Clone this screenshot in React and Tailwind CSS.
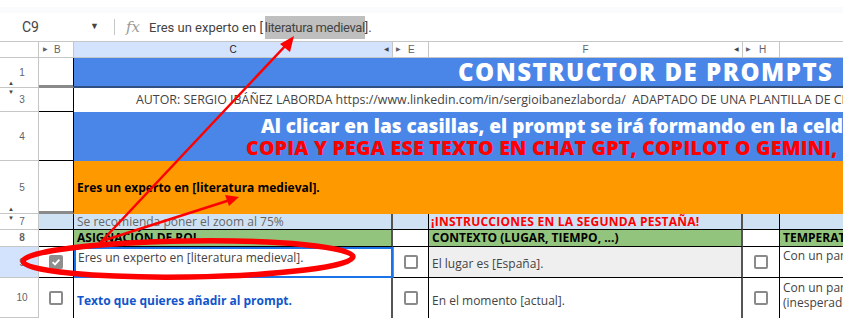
const cell = "font-['Open_Sans',sans-serif]";
const hdr = "font-['Liberation_Sans',Arial,sans-serif] text-[10px] text-[#5f6368]";

function Box({ checked }) {
  if (checked) {
    return (
      <div className="w-[14px] h-[14px] rounded-[2px] bg-[#8e8e8e] flex items-center justify-center">
        <svg width="10" height="10" viewBox="0 0 10 10">
          <path d="M1.6 5.2 L4 7.4 L8.4 2.6" stroke="white" strokeWidth="1.8" fill="none" />
        </svg>
      </div>
    );
  }
  return <div className="w-[14px] h-[14px] rounded-[2px] border-2 border-[#8a8a8a] bg-white" />;
}

function RowNum({ n, h, up, down, sel }) {
  return (
    <div className={`relative shrink-0 w-[39px] ${h} border-r border-b border-[#c4c7c5] ${sel ? 'bg-[#d3e3fd]' : 'bg-white'} flex items-center justify-center pl-[6px] ${hdr}`}>
      {n}
      {up && <span className="absolute left-[8px] bottom-[1px] text-[6px] leading-none text-[#444]">▲</span>}
      {down && <span className="absolute left-[8px] top-[1px] text-[6px] leading-none text-[#444]">▼</span>}
    </div>
  );
}

export default function App() {
  return (
    <div className="relative w-[851px] h-[327px] overflow-hidden bg-white">
      <div className="w-[843px]">
        {/* toolbar remnant */}
        <div className="h-[7px] bg-white" />
        <div className="h-[6px] bg-[#f9fbfd]" />

        {/* formula bar */}
        <div className="h-[28px] flex items-center font-['Roboto',sans-serif] text-[#444]">
          <div className="w-[90px] pl-[22px] text-[14px]">C9</div>
          <div className="w-[20px] text-[9px] text-[#444]">▼</div>
          <div className="w-px h-[16px] bg-[#c4c7c5] ml-[4px]" />
          <div className="ml-[11px] w-[23px] font-['DejaVu_Serif',serif] italic text-[15px] text-[#9a9a9a]">fx</div>
          <div className="text-[13px] whitespace-nowrap">
            Eres un experto en [<span className="bg-[#bfbfbf] inline-block leading-[23px] ml-[2px] tracking-[-0.35px]">literatura medieval</span>].
          </div>
        </div>

        {/* column headers */}
        <div className={`flex h-[17px] border-t border-b border-[#c4c7c5] ${hdr}`}>
          <div className="w-[39px] border-r border-[#c4c7c5]" />
          <div className="w-[35px] border-r border-[#c4c7c5] flex items-center pl-[4px] gap-[6px]">
            <span className="text-[6px]">▶</span>B
          </div>
          <div className="relative w-[319px] bg-[#d3e3fd] border-r border-[#c4c7c5] flex items-center justify-center text-[#1f1f1f]">
            C<span className="absolute right-[3px] text-[6px] text-[#444]">◀</span>
          </div>
          <div className="w-[36px] border-r border-[#c4c7c5] flex items-center pl-[3px] gap-[7px]">
            <span className="text-[6px]">▶</span>E
          </div>
          <div className="relative w-[314px] border-r border-[#c4c7c5] flex items-center justify-center">
            F<span className="absolute right-[3px] text-[6px] text-[#444]">◀</span>
          </div>
          <div className="w-[37px] border-r border-[#c4c7c5] flex items-center pl-[3px] gap-[8px]">
            <span className="text-[6px]">▶</span>H
          </div>
          <div className="flex-1" />
        </div>

        {/* row 1 */}
        <div className="flex h-[30px]">
          <RowNum n="1" h="h-[30px]" up />
          <div className="w-[35px] bg-white border-r border-black border-b-[3px] border-b-[#8a8a8a]" />
          <div className={`flex-1 bg-[#4a86e8] border-b-2 border-[#2f4f80] flex items-center pl-[384px] overflow-hidden whitespace-nowrap ${cell} text-white font-extrabold text-[24px] tracking-[1.5px]`}>
            CONSTRUCTOR DE PROMPTS
          </div>
        </div>

        {/* row 3 */}
        <div className="flex h-[24px]">
          <RowNum n="3" h="h-[24px]" down />
          <div className="w-[35px] bg-white border-r border-b border-black" />
          <div className={`flex-1 bg-white flex items-center pl-[62px] overflow-hidden whitespace-nowrap ${cell} text-[12.4px] text-[#434343]`}>
            AUTOR: SERGIO IBÁÑEZ LABORDA https://www.linkedin.com/in/sergioibanezlaborda/&nbsp; ADAPTADO DE UNA PLANTILLA DE CLAUDIA
          </div>
        </div>

        {/* row 4 */}
        <div className="flex h-[49px]">
          <RowNum n="4" h="h-[49px]" />
          <div className="w-[35px] bg-white border-r border-b border-black" />
          <div className={`flex-1 bg-[#4a86e8] flex flex-col justify-center overflow-hidden whitespace-nowrap ${cell} font-extrabold leading-[22px]`}>
            <div className="pl-[187px] text-white text-[19px]">Al clicar en las casillas, el prompt se irá formando en la celda</div>
            <div className="pl-[172px] text-[#ff0000] text-[19.5px] tracking-[0.25px]">COPIA Y PEGA ESE TEXTO EN CHAT GPT, COPILOT O GEMINI,</div>
          </div>
        </div>

        {/* row 5 */}
        <div className="flex h-[53px]">
          <RowNum n="5" h="h-[53px]" up />
          <div className="w-[35px] bg-white border-r border-black border-b-[3px] border-b-[#8a8a8a]" />
          <div className={`flex-1 bg-[#ff9900] flex items-center pl-[3px] pt-[1px] overflow-hidden whitespace-nowrap ${cell} font-bold text-[12px] text-black`}>
            Eres un experto en [literatura medieval].
          </div>
        </div>

        {/* row 7 */}
        <div className={`flex h-[16px] ${cell} text-[12px] leading-none`}>
          <RowNum n="7" h="h-[16px]" down />
          <div className="w-[35px] bg-[#cfe2f3] border-r border-b border-black" />
          <div className="w-[319px] bg-[#cfe2f3] border-r-2 border-r-[#555] border-b border-black flex items-center pl-[3px] text-[#666] whitespace-nowrap">
            Se recomienda poner el zoom al 75%
          </div>
          <div className="w-[36px] bg-[#cfe2f3] border-r border-b border-black" />
          <div className="w-[314px] bg-[#cfe2f3] border-r-2 border-r-[#555] border-b border-black flex items-center pl-[2px] font-bold text-[#ff0000] tracking-[0.25px] whitespace-nowrap">
            ¡INSTRUCCIONES EN LA SEGUNDA PESTAÑA!
          </div>
          <div className="w-[37px] bg-[#cfe2f3] border-r border-b border-black" />
          <div className="flex-1 bg-[#cfe2f3] border-b border-black" />
        </div>

        {/* row 8 */}
        <div className={`flex h-[17px] ${cell} text-[12px] leading-none font-bold`}>
          <RowNum n="8" h="h-[17px]" />
          <div className="w-[35px] bg-white border-r border-b border-black" />
          <div className="w-[319px] bg-[#93c47d] border-r-2 border-r-[#555] border-b border-black flex items-center pl-[3px] whitespace-nowrap">
            ASIGNACIÓN DE ROL
          </div>
          <div className="w-[36px] bg-white border-r border-b border-black" />
          <div className="w-[314px] bg-[#93c47d] border-r-2 border-r-[#555] border-b border-black flex items-center pl-[3px] whitespace-nowrap">
            CONTEXTO (LUGAR, TIEMPO, ...)
          </div>
          <div className="w-[37px] bg-white border-r border-b border-black" />
          <div className="flex-1 bg-[#93c47d] border-b border-black flex items-center pl-[3px] overflow-hidden whitespace-nowrap">
            TEMPERATURA
          </div>
        </div>

        {/* row 9 */}
        <div className={`flex h-[31px] ${cell} text-[12px] text-[#434343]`}>
          <RowNum n="9" h="h-[31px]" sel />
          <div className="w-[35px] bg-white border-r border-b border-black flex items-center justify-center">
            <Box checked />
          </div>
          <div className="w-[319px] bg-white border-2 border-[#1a73e8] pl-[2px] pt-[1px] leading-[16px] whitespace-nowrap">
            Eres un experto en [literatura medieval].
          </div>
          <div className="w-[36px] bg-white border-l border-l-[#888] border-r border-b border-black flex items-center justify-center">
            <Box />
          </div>
          <div className="w-[314px] bg-[#efefef] border-r-2 border-r-[#555] border-b border-black flex items-center pl-[3px] pt-[4px] whitespace-nowrap">
            El lugar es [España].
          </div>
          <div className="w-[37px] bg-white border-r border-b border-black flex items-center justify-center">
            <Box />
          </div>
          <div className="flex-1 bg-white border-b border-black pl-[3px] pt-[1px] leading-[16px] overflow-hidden whitespace-nowrap">
            Con un par
          </div>
        </div>

        {/* row 10 */}
        <div className={`flex h-[40px] ${cell} text-[12px] text-[#434343]`}>
          <RowNum n="10" h="h-[40px]" />
          <div className="w-[35px] bg-white border-r border-black flex items-center justify-center">
            <Box />
          </div>
          <div className="w-[319px] bg-white border-r-2 border-r-[#555] flex items-center pl-[3px] pt-[6px] font-bold text-[#1155cc] whitespace-nowrap">
            Texto que quieres añadir al prompt.
          </div>
          <div className="w-[36px] bg-white border-r border-black flex items-center justify-center">
            <Box />
          </div>
          <div className="w-[314px] bg-white border-r-2 border-r-[#555] flex items-center pl-[3px] pt-[6px] whitespace-nowrap">
            En el momento [actual].
          </div>
          <div className="w-[37px] bg-white border-r border-black flex items-center justify-center">
            <Box />
          </div>
          <div className="flex-1 bg-white pl-[3px] pt-[2px] leading-[15px] overflow-hidden whitespace-nowrap">
            <div>Con un par</div>
            <div>(inesperado</div>
          </div>
        </div>
      </div>

      {/* red annotations */}
      <svg className="absolute inset-0 pointer-events-none" width="851" height="327" viewBox="0 0 851 327">
        <ellipse cx="188" cy="259" rx="165" ry="18" fill="none" stroke="#ff0000" strokeWidth="5.5" transform="rotate(-0.8 188 259)" />
        <line x1="100" y1="243" x2="288" y2="43" stroke="#ff0000" strokeWidth="2.5" />
        <polygon points="294,36 280,44 290,52" fill="#ff0000" />
        <line x1="102" y1="241" x2="230" y2="200" stroke="#ff0000" strokeWidth="2.5" />
        <polygon points="239,197 225,195 229,206" fill="#ff0000" />
      </svg>
    </div>
  );
}
